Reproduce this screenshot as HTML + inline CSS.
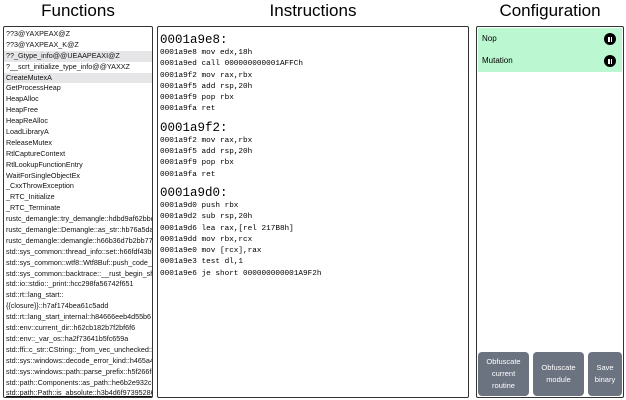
<!DOCTYPE html>
<html><head><style>
*{margin:0;padding:0;box-sizing:border-box}
body{width:626px;height:400px;background:#fff;font-family:"Liberation Sans",sans-serif;position:relative;overflow:hidden;color:#000}
.t{position:absolute;top:1px;font-size:17px;text-align:center}
.p{position:absolute;top:26px;height:372px;border:1px solid #333;border-radius:2px;overflow:hidden}
.f div{height:10.9px;line-height:10.9px;font-size:7.2px;padding-left:2px;white-space:nowrap;color:#111}
.hl{background:#e6e6e9}
.ins{font-family:"Liberation Mono",monospace;padding-left:2px}
.h{font-size:12.5px;height:15px;line-height:15px;margin-top:5px}
.l{font-size:7.7px;height:11.3px;line-height:11.3px}
.btn{position:absolute;top:352px;height:44px;background:#6b7280;color:#fff;font-size:7.5px;text-align:center;border-radius:4px;display:flex;align-items:center;justify-content:center;line-height:12px}
.tg{position:absolute;right:6px;width:12px;height:12px;border-radius:50%;background:#000}
.tg:before,.tg:after{content:"";position:absolute;top:3.5px;width:1.5px;height:5px;background:#fff}
.tg:before{left:4px}.tg:after{left:6.5px}
</style></head><body>
<div class="t" style="left:3px;width:150px">Functions</div>
<div class="t" style="left:157px;width:312px">Instructions</div>
<div class="t" style="left:476px;width:148px">Configuration</div>
<div class="p f" style="left:3px;width:150px;padding-top:2px">
<div>??3@YAXPEAX@Z</div><div>??3@YAXPEAX_K@Z</div><div class="hl">??_Gtype_info@@UEAAPEAXI@Z</div><div>?__scrt_initialize_type_info@@YAXXZ</div><div class="hl">CreateMutexA</div><div>GetProcessHeap</div><div>HeapAlloc</div><div>HeapFree</div><div>HeapReAlloc</div><div>LoadLibraryA</div><div>ReleaseMutex</div><div>RtlCaptureContext</div><div>RtlLookupFunctionEntry</div><div>WaitForSingleObjectEx</div><div>_CxxThrowException</div><div>_RTC_Initialize</div><div>_RTC_Terminate</div><div>rustc_demangle::try_demangle::hdbd9af62bbc</div><div>rustc_demangle::Demangle::as_str::hb76a5daf</div><div>rustc_demangle::demangle::h66b36d7b2bb77</div><div>std::sys_common::thread_info::set::h66fdf43b5</div><div>std::sys_common::wtf8::Wtf8Buf::push_code_p</div><div>std::sys_common::backtrace::__rust_begin_sho</div><div>std::io::stdio::_print::hcc298fa56742f651</div><div>std::rt::lang_start::</div><div>{{closure}}::h7af174bea61c5add</div><div>std::rt::lang_start_internal::h84666eeb4d55b6</div><div>std::env::current_dir::h62cb182b7f2bf6f6</div><div>std::env::_var_os::ha2f73641b5fc659a</div><div>std::ffi::c_str::CString::_from_vec_unchecked::h6</div><div>std::sys::windows::decode_error_kind::h465a48</div><div>std::sys::windows::path::parse_prefix::h5f266f5</div><div>std::path::Components::as_path::he6b2e932c6</div><div style="text-decoration:underline">std::path::Path::is_absolute::h3b4d6f97395286</div>
</div>
<div class="p ins" style="left:157px;width:312px;padding-top:1px">
<div class="h">0001a9e8:</div>
<div class="l">0001a9e8 mov edx,18h</div><div class="l">0001a9ed call 000000000001AFFCh</div><div class="l">0001a9f2 mov rax,rbx</div><div class="l">0001a9f5 add rsp,20h</div><div class="l">0001a9f9 pop rbx</div><div class="l">0001a9fa ret</div>
<div class="h">0001a9f2:</div>
<div class="l">0001a9f2 mov rax,rbx</div><div class="l">0001a9f5 add rsp,20h</div><div class="l">0001a9f9 pop rbx</div><div class="l">0001a9fa ret</div>
<div class="h">0001a9d0:</div>
<div class="l">0001a9d0 push rbx</div><div class="l">0001a9d2 sub rsp,20h</div><div class="l">0001a9d6 lea rax,[rel 217B8h]</div><div class="l">0001a9dd mov rbx,rcx</div><div class="l">0001a9e0 mov [rcx],rax</div><div class="l">0001a9e3 test dl,1</div><div class="l">0001a9e6 je short 000000000001A9F2h</div>
</div>
<div class="p" style="left:476px;width:148px"></div>
<div style="position:absolute;left:478px;top:28px;width:144px;height:44px;background:#bbf7d0;font-size:8px">
<div style="position:absolute;left:4px;top:6px">Nop</div><div class="tg" style="top:5px"></div>
<div style="position:absolute;left:4px;top:28px">Mutation</div><div class="tg" style="top:27px"></div>
</div>
<div class="btn" style="left:478px;width:51px">Obfuscate<br>current<br>routine</div>
<div class="btn" style="left:533px;width:51px">Obfuscate<br>module</div>
<div class="btn" style="left:588px;width:34px">Save<br>binary</div>
</body></html>
